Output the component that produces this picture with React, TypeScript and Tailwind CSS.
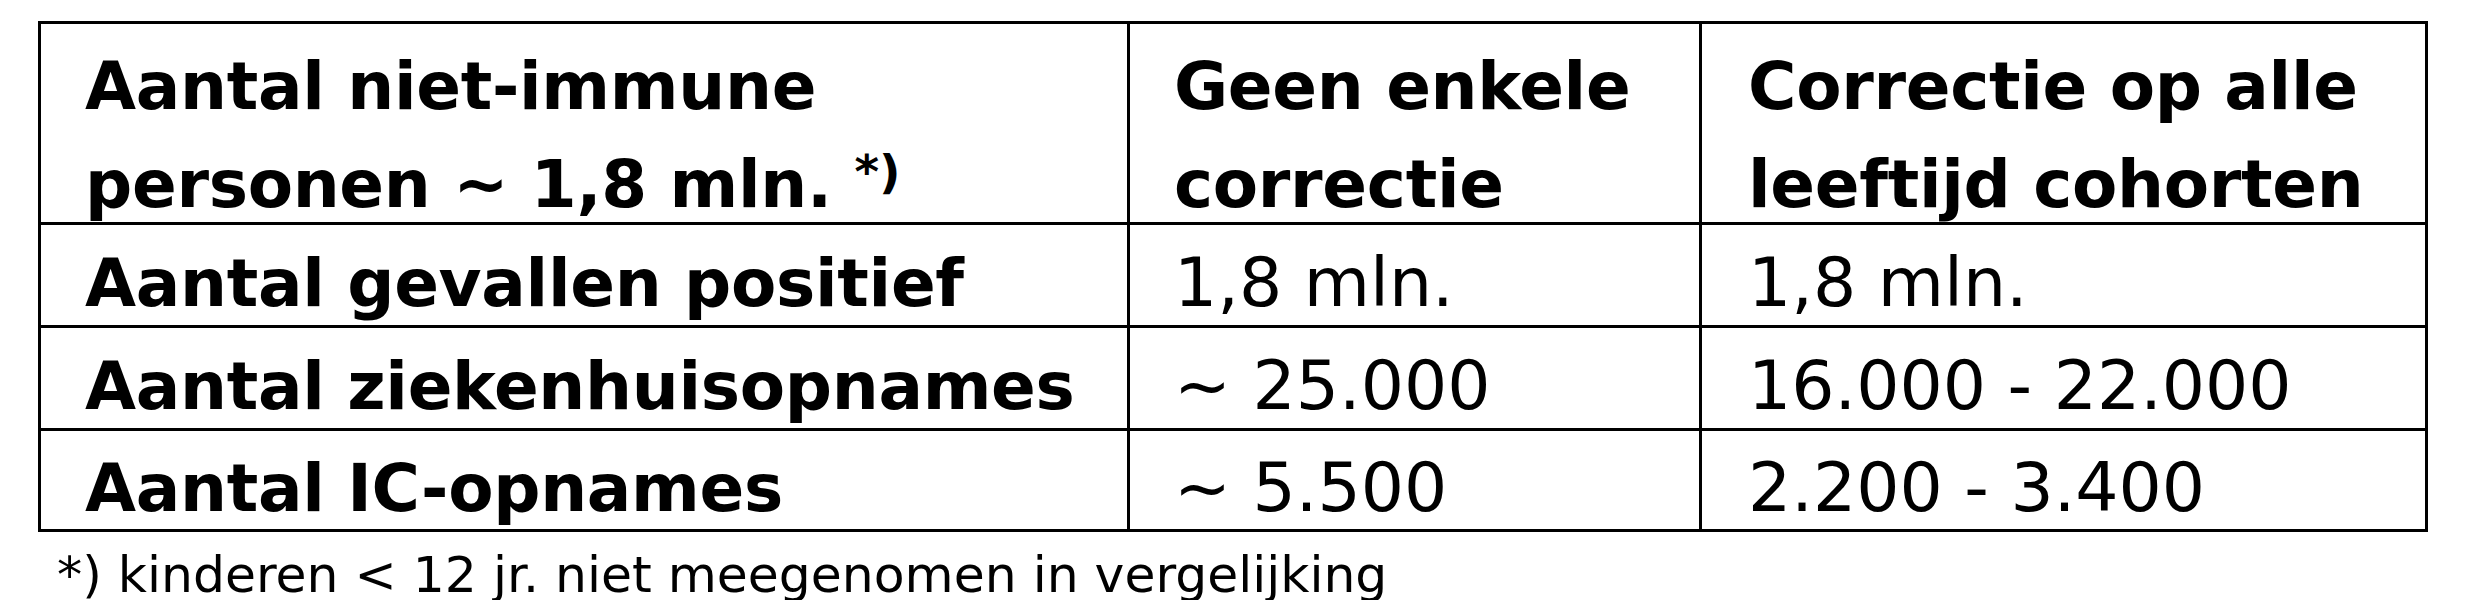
import React from "react";

const font = { fontFamily: '"DejaVu Sans", Verdana, sans-serif' };

export default function App() {
  const cell = "bg-white overflow-visible whitespace-nowrap";
  const b = "text-[66px] font-bold tracking-[-0.3px]";
  return (
    <div className="w-[2466px] h-[600px] bg-white text-black overflow-hidden" style={font}>
      <div className="pt-[21px] pl-[38px]">
        <div className="grid w-[2390px] grid-cols-[1086px_569px_723px] grid-rows-[198px_100px_100px_98px] gap-[3px] bg-black p-[3px]">
          <div className={`${cell} ${b} pl-[44px] pt-[14px] leading-[98px]`}>
            <div>Aantal niet-immune</div>
            <div>
              personen ~ 1,8 mln.{" "}
              <span className="relative top-[-19px] text-[47px] font-semibold tracking-normal">*)</span>
            </div>
          </div>
          <div className={`${cell} ${b} pl-[44px] pt-[14px] leading-[98px]`}>
            <div>Geen enkele</div>
            <div>correctie</div>
          </div>
          <div className={`${cell} ${b} pl-[46px] pt-[14px] leading-[98px]`}>
            <div>Correctie op alle</div>
            <div>leeftijd cohorten</div>
          </div>

          <div className={`${cell} ${b} pl-[44px] pt-[17px] leading-[84px]`}>Aantal gevallen positief</div>
          <div className={`${cell} pl-[44px] pt-[16px] text-[68px] leading-[84px]`}>1,8 mln.</div>
          <div className={`${cell} pl-[46px] pt-[16px] text-[68px] leading-[84px]`}>1,8 mln.</div>

          <div className={`${cell} ${b} pl-[44px] pt-[17px] leading-[84px]`}>Aantal ziekenhuisopnames</div>
          <div className={`${cell} pl-[44px] pt-[16px] text-[68px] leading-[84px]`}>~ 25.000</div>
          <div className={`${cell} pl-[46px] pt-[16px] text-[68px] leading-[84px]`}>16.000 - 22.000</div>

          <div className={`${cell} ${b} pl-[44px] pt-[16px] leading-[84px]`}>Aantal IC-opnames</div>
          <div className={`${cell} pl-[44px] pt-[15px] text-[68px] leading-[84px]`}>~ 5.500</div>
          <div className={`${cell} pl-[46px] pt-[15px] text-[68px] leading-[84px]`}>2.200 - 3.400</div>
        </div>
        <div className="pl-[19px] pt-[13px] text-[50.4px] leading-[60px] whitespace-nowrap">*) kinderen &lt; 12 jr. niet meegenomen in vergelijking</div>
      </div>
    </div>
  );
}
